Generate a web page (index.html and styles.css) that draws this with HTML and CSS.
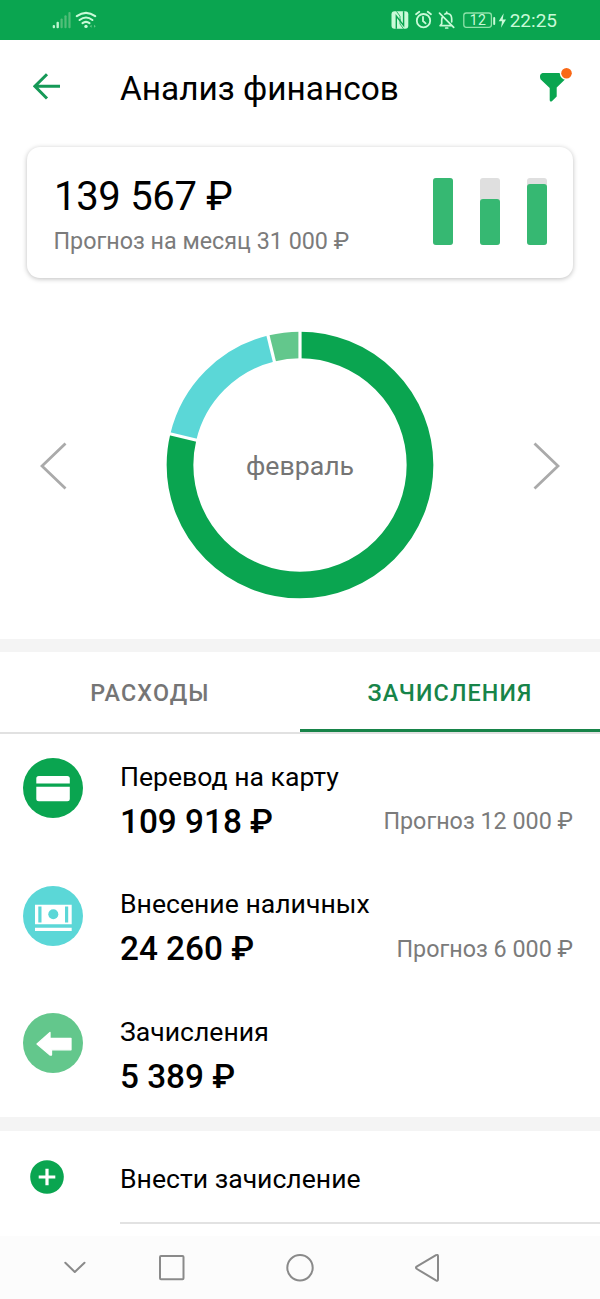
FILE: index.html
```html
<!DOCTYPE html>
<html lang="ru">
<head>
<meta charset="utf-8">
<title>Анализ финансов</title>
<link rel="stylesheet" href="styles.css">
</head>
<body>
<div class="screen">
  <div class="status">
    <svg class="signals" width="46" height="18" viewBox="52 11 46 18">
      <g fill="#bdf5cf"><rect x="52.7" y="25" width="2.3" height="3.3" rx="1"/><rect x="56.5" y="21.7" width="2.4" height="6.6" rx="1"/></g>
      <g fill="#53bd79"><rect x="60.5" y="18.5" width="2.2" height="9.8" rx="1"/><rect x="64.4" y="15.3" width="2.2" height="13" rx="1"/><rect x="68.4" y="12" width="2.2" height="16.3" rx="1"/></g>
      <g fill="none" stroke="#c9fad8" stroke-width="2.1" stroke-linecap="round"><path d="M76.8 16.2Q86 9.4 95.2 16.2"/><path d="M79.6 20Q86 15 92.4 20"/><path d="M82.5 23.2Q86 20.6 89.5 23.2"/></g>
      <circle cx="86" cy="26.4" r="1.7" fill="#c9fad8"/>
      <path d="M89.8 26.3l1.8-1.5v3zM95.8 26.3l-1.8-1.5v3z" fill="#62c986"/>
    </svg>
    <div class="status-right">
      <svg width="118" height="20" viewBox="390 10 118 20">
        <rect x="391.5" y="11.3" width="16.800" height="17.500" rx="3" fill="#c9fad8"/>
        <path d="M396.300 28.800V16L403.600 25.500V11.300" fill="none" stroke="#0aa550" stroke-width="1.400"/>
        <path d="M396.500 11.300L400 16.200V20.500M403.500 28.800L400 24V19" fill="none" stroke="#0aa550" stroke-width=".8"/>
        <g fill="none" stroke="#c9fad8" stroke-width="1.800" stroke-linecap="round"><circle cx="423.500" cy="20.700" r="6.700"/><path d="M423 17v4l2.600 2.400M416 14.300l3.300-2.600M431 14.300l-3.300-2.600"/></g>
        <g fill="none" stroke="#c9fad8" stroke-width="1.700" stroke-linecap="round" stroke-linejoin="round"><path d="M439.500 13.200l14.200 14.200M442.800 16.600Q441.700 18 441.700 20v3.700l-1.600 2h11.600M444.800 14.100Q446.500 13 448.500 13.700Q451.700 14.700 451.700 19v2.800M446.700 12v1M445.700 28h2"/></g>
        <rect x="463.800" y="13" width="27.600" height="14.300" rx="2.500" fill="none" stroke="#8ee2a9" stroke-width="1.300"/>
        <rect x="493.200" y="17" width="2" height="8" rx="1" fill="#c9fad8"/>
        <text class="battery-level" x="477.900" y="25">12</text>
        <path d="M503.700 13.300l-5 8h3.300l-1 6.500 5-8.300h-3.300z" fill="#c9fad8"/>
      </svg>
      <span class="time">22:25</span>
    </div>
  </div>

  <header class="header">
    <svg class="back" width="27" height="27" viewBox="0 0 27 27"><path d="M27 13.300H2M14 1.200L1.900 13.300L14 25.500" fill="none" stroke="#159957" stroke-width="3"/></svg>
    <h1>Анализ финансов</h1>
    <svg class="filter" width="33" height="36" viewBox="540 67 33 36">
      <path d="M542.500 73h19.500q4.500 1 4.500 5l-9.800 9.500v9l-4.800 4.800q-2.200.8-2.200-1.400V88l-9.200-8.700q-1.700-5.300 2-6.300z" fill="#0aa550"/>
      <circle cx="566.500" cy="73.300" r="6.700" fill="#fff"/><circle cx="566.500" cy="73.300" r="5.300" fill="#f96816"/>
    </svg>
  </header>

  <section class="summary">
    <div>
      <div class="total">139 567 ₽</div>
      <div class="muted">Прогноз на месяц 31 000 ₽</div>
    </div>
    <div class="bars">
      <div class="bar"><div class="fill" style="height:100%"></div></div>
      <div class="bar"><div class="fill" style="height:68%"></div></div>
      <div class="bar"><div class="fill" style="height:90.500%"></div></div>
    </div>
  </section>

  <section class="chart">
    <svg width="27" height="48" viewBox="0 0 27 48"><path d="M25.500 1.500L2 24l23.500 22.500" fill="none" stroke="#aaa" stroke-width="2.800"/></svg>
    <div class="donut">
      <svg width="268" height="268" viewBox="-134 -134 268 268">
        <g fill="none" stroke-width="26.700" transform="rotate(-90)">
          <circle r="120" pathLength="360" stroke="#0aa550" stroke-dasharray="283.500 360"/>
          <circle r="120" pathLength="360" stroke="#5bd7d7" stroke-dasharray="62.600 360" stroke-dashoffset="-283.500"/>
          <circle r="120" pathLength="360" stroke="#63c78c" stroke-dasharray="13.900 360" stroke-dashoffset="-346.100"/>
        </g>
        <g stroke="#fff" stroke-width="3.200"><path d="M0-104V-134"/><path d="M0-104V-134" transform="rotate(-13.900)"/><path d="M0-104V-134" transform="rotate(-76.500)"/></g>
      </svg>
      <span class="month">февраль</span>
    </div>
    <svg width="27" height="48" viewBox="0 0 27 48"><path d="M1.500 1.500L25 24L1.500 46.500" fill="none" stroke="#aaa" stroke-width="2.800"/></svg>
  </section>

  <div class="band"></div>
  <nav class="tabs"><div class="tab">РАСХОДЫ</div><div class="tab active">ЗАЧИСЛЕНИЯ</div></nav>

  <main class="list">
    <div class="item">
      <svg width="60" height="60" viewBox="0 0 60 60"><circle cx="30" cy="30" r="30" fill="#0aa550"/><rect x="13.300" y="18" width="33.500" height="25.300" rx="2.500" fill="#fff"/><path d="M13 25.500h34v3.200H13z" fill="#0aa550"/></svg>
      <div class="info"><div class="name">Перевод на карту</div><div class="line"><span class="amount">109 918 ₽</span><span class="muted">Прогноз 12 000 ₽</span></div></div>
    </div>
    <div class="item">
      <svg width="60" height="60" viewBox="0 0 60 60"><circle cx="30" cy="30" r="30" fill="#5bd7d7"/><path d="M12 18.700h36.700v19.600H12zM12 41.700h36.700V45H12z" fill="#fff"/><path d="M15.300 20.600h3.200v15.800h-3.200zM42 20.600h3.200v15.800H42z" fill="#5bd7d7"/><circle cx="30.300" cy="28.300" r="5" fill="#5bd7d7"/></svg>
      <div class="info"><div class="name">Внесение наличных</div><div class="line"><span class="amount">24 260 ₽</span><span class="muted">Прогноз 6 000 ₽</span></div></div>
    </div>
    <div class="item">
      <svg width="60" height="60" viewBox="0 0 60 60"><circle cx="30" cy="30" r="30" fill="#63c78c"/><path d="M14 31L27 19.500v5.800h21v11.500H28.500v5.200H27z" fill="#fff" stroke="#fff" stroke-width="1.300" stroke-linejoin="round"/></svg>
      <div class="info"><div class="name">Зачисления</div><div class="line"><span class="amount">5 389 ₽</span></div></div>
    </div>
  </main>

  <div class="band lower"></div>
  <div class="add">
    <svg width="34" height="34" viewBox="0 0 34 34"><circle cx="17" cy="17" r="16.800" fill="#0aa550"/><path d="M17 8.700v16.600M8.700 17h16.600" stroke="#fff" stroke-width="3.200"/></svg>
    <div class="add-label">Внести зачисление</div>
  </div>

  <footer class="system-nav">
    <svg width="600" height="63" viewBox="0 1236 600 63"><g fill="none" stroke="#8a8a8a" stroke-width="2" stroke-linecap="round" stroke-linejoin="round"><path d="M65.300 1262.700l9.500 9.300 9.700-9.300"/><rect x="160" y="1256" width="23.500" height="23.300" rx="1"/><circle cx="300" cy="1267.700" r="12.700"/><path d="M416.300 1267.800Q415.500 1267.300 417 1266.400L436 1255.200Q438 1254.300 438 1256V1279.300Q438 1281.400 436 1280.300L417 1269Q415.800 1268.300 416.300 1267.800z"/></g></svg>
  </footer>
</div>
</body>
</html>
```
FILE: styles.css
```css
* { box-sizing: border-box; }
body { margin: 0; background: #fff; font-family: Roboto, "Noto Sans", sans-serif; color: #000; }
svg { display: block; flex: none; }
.screen { width: 600px; height: 1299px; display: flex; flex-direction: column; overflow: hidden; }
.screen > * { flex: none; }

.status { height: 40px; background: #0aa550; display: flex; justify-content: space-between; align-items: center; padding: 0 43px 0 52px; }
.status-right { display: flex; align-items: center; gap: 2px; }
.battery-level { font-size: 14px; fill: #c9fad8; text-anchor: middle; letter-spacing: .4px; }
.time { font-size: 19px; line-height: 22px; padding-top: 1px; color: #c9fad8; }

.header { height: 107px; display: flex; align-items: flex-start; padding: 27px 27px 0 33px; }
.back { margin-top: 6px; }
.header h1 { flex: 1; margin: 1px 0 0 60px; font-size: 33.4px; line-height: 42px; font-weight: 400; }

.summary { height: 131px; margin: 0 27px; padding: 31px 26px 0 27px; border-radius: 13px; display: flex; justify-content: space-between; box-shadow: 0 1px 5px rgba(0, 0, 0, .26); }
.total { padding-top: 1px; font-size: 40px; line-height: 36px; letter-spacing: -.3px; }
.muted { color: #7b7b7b; font-size: 23.3px; line-height: 28px; }
.summary .muted { margin-top: 12px; margin-left: -.5px; }
.bars { display: flex; gap: 27px; }
.bar { width: 20px; height: 66.7px; border-radius: 3px; background: #dfdfdf; display: flex; align-items: flex-end; }
.fill { width: 100%; border-radius: 3px; background: #36b872; }

.chart { height: 361px; padding: 53.5px 40px 0; display: flex; justify-content: space-between; align-items: flex-start; }
.chart > svg { margin-top: 110px; }
.donut { display: grid; place-items: center; margin-top: -.2px; }
.donut > * { grid-area: 1 / 1; }
.month { padding-top: 2px; font-size: 26.7px; line-height: 32px; color: #757575; }

.band { height: 13px; background: #f4f4f4; }
.band.lower { height: 14px; }
.tabs { height: 82px; display: flex; border-bottom: 2px solid #e1e1e1; }
.tab { flex: 1; text-align: center; font-size: 23.3px; line-height: 82px; font-weight: 500; letter-spacing: 1.15px; color: #757575; }
.tab.active { color: #178449; height: 80px; border-bottom: 3px solid #178449; }

.list { height: 383px; padding: 24px 27px 0 23px; display: flex; flex-direction: column; gap: 67.7px; }
.item { height: 60px; display: flex; gap: 37px; }
.info { flex: 1; padding-top: 1.5px; }
.name { font-size: 26.6px; line-height: 34px; }
.line { display: flex; align-items: center; justify-content: space-between; }
.amount { font-size: 33.3px; line-height: 55px; font-weight: 500; }

.add { height: 105px; padding-left: 29.500px; display: flex; gap: 56.500px; }
.add svg { margin-top: 29px; }
.add-label { flex: 1; height: 93px; line-height: 96px; font-size: 26.6px; border-bottom: 2px solid #e2e2e2; }
.system-nav { height: 63px; background: #fcfcfc; }
```
